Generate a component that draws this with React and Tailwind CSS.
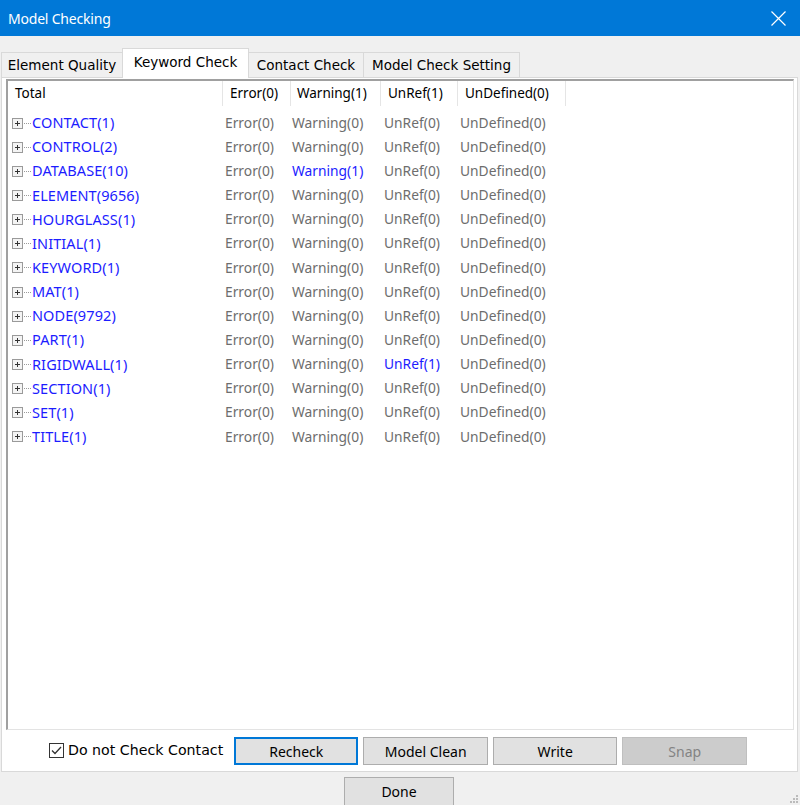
import React from "react";

const rows = [
  { name: "CONTACT(1)" },
  { name: "CONTROL(2)" },
  { name: "DATABASE(10)", warn: true },
  { name: "ELEMENT(9656)" },
  { name: "HOURGLASS(1)" },
  { name: "INITIAL(1)" },
  { name: "KEYWORD(1)" },
  { name: "MAT(1)" },
  { name: "NODE(9792)" },
  { name: "PART(1)" },
  { name: "RIGIDWALL(1)", unref: true },
  { name: "SECTION(1)" },
  { name: "SET(1)" },
  { name: "TITLE(1)" },
];

const tabs = ["Element Quality", "Keyword Check", "Contact Check", "Model Check Setting"];
const tabWidths = ["w-[121px]", "w-[127px]", "w-[115px]", "w-[156px]"];

function PlusBox() {
  return (
    <svg width="20" height="11" viewBox="0 0 20 11" className="shrink-0">
      <rect x="0.5" y="0.5" width="10" height="10" fill="#f4f4f4" stroke="#9a9a9a" />
      <path d="M3 5.5h5M5.5 3v5" stroke="#333" strokeWidth="1" />
      <path d="M12 5.5h1M14 5.5h1M16 5.5h1M18 5.5h1" stroke="#9a9a9a" strokeWidth="1" />
    </svg>
  );
}

export default function App() {
  const ui = { fontFamily: '"Noto Sans", "Open Sans", sans-serif' };
  const tahoma = { fontFamily: '"DejaVu Sans", sans-serif' };

  return (
    <div className="w-[800px] h-[805px] bg-[#f0f0f0] overflow-hidden flex flex-col" style={ui}>
      {/* TITLE BAR */}
      <div className="h-[36px] bg-[#0078d7] flex items-center justify-between pl-[8px] pr-[14px] shrink-0">
        <span className="text-white text-[14px] tracking-[-0.2px]">Model Checking</span>
        <svg width="15" height="15" viewBox="0 0 15 15">
          <path d="M0.5 0.5L14.5 14.5M14.5 0.5L0.5 14.5" stroke="#fff" strokeWidth="1.2" />
        </svg>
      </div>

      {/* TABS */}
      <div className="h-[42px] shrink-0 flex items-end pl-[1px] -mb-px relative z-10" style={tahoma}>
        {tabs.map((t, i) =>
          i === 1 ? (
            <div
              key={t}
              className={`${tabWidths[i]} h-[30px] bg-white border border-b-0 border-[#d9d9d9] flex items-start pt-[3px] justify-center text-[13.5px] text-black`}
            >
              {t}
            </div>
          ) : (
            <div
              key={t}
              className={`${tabWidths[i]} h-[26px] bg-[#f0f0f0] border border-[#d9d9d9] ${i > 1 ? "border-l-0" : "border-r-0"} flex items-center justify-center text-[13.5px] text-black`}
            >
              {t}
            </div>
          )
        )}
      </div>

      {/* PANEL */}
      <div className="ml-[1px] w-[797px] h-[695px] shrink-0 bg-white border border-[#d9d9d9] flex flex-col">
        {/* LIST */}
        <div className="ml-[4px] mt-[1px] w-[788px] h-[651px] border-t-2 border-l-2 border-t-[#a0a0a0] border-l-[#a0a0a0] border-r border-b border-r-[#e3e3e3] border-b-[#e3e3e3] bg-white">
          <div className="h-[25px] flex text-[13.5px] text-black">
            <div className="w-[215px] pl-[7px] border-r border-[#e5e5e5] flex items-center">Total</div>
            <div className="w-[68px] pl-[7px] border-r border-[#e5e5e5] flex items-center">Error(0)</div>
            <div className="w-[90px] pl-[6px] border-r border-[#e5e5e5] flex items-center">Warning(1)</div>
            <div className="w-[77px] pl-[7px] border-r border-[#e5e5e5] flex items-center">UnRef(1)</div>
            <div className="w-[108px] pl-[7px] border-r border-[#e5e5e5] flex items-center">UnDefined(0)</div>
          </div>
          <div className="pt-[5px]">
            {rows.map((r) => (
              <div key={r.name} className="h-[24.15px] flex items-center text-[13.8px] text-[#6d6d6d]">
                <div className="w-[216px] pl-[4px] flex items-center">
                  <PlusBox />
                  <span className="text-[#1c1cff] text-[14.5px] tracking-[0.1px]">{r.name}</span>
                </div>
                <div className="w-[68px] pl-[1px]">Error(0)</div>
                <div className="w-[92px] pl-[0px]">
                  <span className={r.warn ? "text-[#1c1cff]" : ""}>Warning({r.warn ? 1 : 0})</span>
                </div>
                <div className="w-[76px]">
                  <span className={r.unref ? "text-[#1c1cff]" : ""}>UnRef({r.unref ? 1 : 0})</span>
                </div>
                <div>UnDefined(0)</div>
              </div>
            ))}
          </div>
        </div>

        {/* BUTTON ROW */}
        <div className="flex items-center mt-[7px] h-[28px]">
          <label className="ml-[47px] flex items-center gap-[4px] text-[14.2px] text-black" style={tahoma}>
            <span className="w-[15px] h-[15px] border border-[#333] bg-white flex items-center justify-center">
              <svg width="11" height="9" viewBox="0 0 11 9">
                <path d="M1 4.5L4 7.5L10 1" fill="none" stroke="#333" strokeWidth="1.3" />
              </svg>
            </span>
            Do not Check Contact
          </label>
          <button className="ml-[11px] w-[124px] h-[28px] bg-[#e1e1e1] border-2 border-[#0078d7] text-[14px] text-black">
            Recheck
          </button>
          <button className="ml-[5px] w-[125px] h-[28px] bg-[#e1e1e1] border border-[#adadad] text-[14px] text-black">
            Model Clean
          </button>
          <button className="ml-[5px] w-[124px] h-[28px] bg-[#e1e1e1] border border-[#adadad] text-[14px] text-black">
            Write
          </button>
          <button className="ml-[5px] w-[125px] h-[28px] bg-[#cccccc] border border-[#bfbfbf] text-[14px] text-[#838383]">
            Snap
          </button>
        </div>
      </div>

      {/* FOOTER */}
      <div className="flex-1 relative">
        <button className="absolute left-[344px] top-[5px] w-[110px] h-[34px] bg-[#e1e1e1] border border-[#adadad] text-[14px] text-black pb-[6px]">
          Done
        </button>
        <svg width="8" height="8" viewBox="0 0 8 8" className="absolute right-[2px] bottom-[2px]">
          <rect x="6" y="0" width="2" height="2" fill="#bbb" />
          <rect x="3" y="3" width="2" height="2" fill="#bbb" />
          <rect x="6" y="3" width="2" height="2" fill="#bbb" />
          <rect x="0" y="6" width="2" height="2" fill="#bbb" />
          <rect x="3" y="6" width="2" height="2" fill="#bbb" />
          <rect x="6" y="6" width="2" height="2" fill="#bbb" />
        </svg>
      </div>
    </div>
  );
}
